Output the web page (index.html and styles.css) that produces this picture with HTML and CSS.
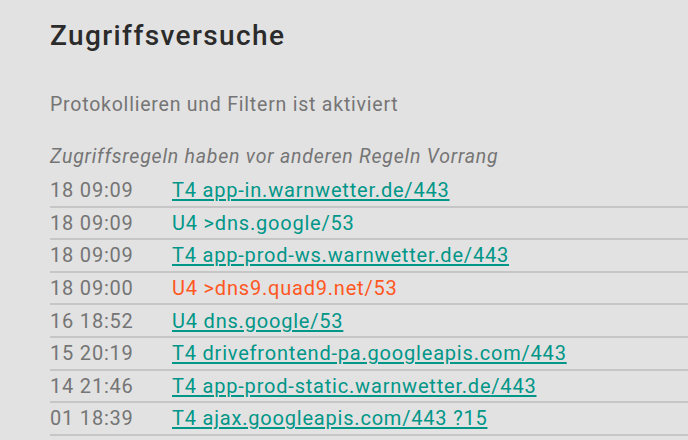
FILE: index.html
```html
<!DOCTYPE html>
<html lang="de">
<head>
    <meta charset="UTF-8">
    <meta name="viewport" content="width=device-width, initial-scale=1.0">
    <title>Zugriffsversuche</title>
    <link rel="stylesheet" href="styles.css">
</head>
<body>
    <div class="dialog">
        <h1 class="title">Zugriffsversuche</h1>
        <p class="status">Protokollieren und Filtern ist aktiviert</p>
        <p class="hint">Zugriffsregeln haben vor anderen Regeln Vorrang</p>
        <ul class="access-list">
            <li class="row"><span class="time">18 09:09</span><a class="dest" href="#">T4 app-in.warnwetter.de/443</a></li>
            <li class="row"><span class="time">18 09:09</span><span class="dest">U4 &gt;dns.google/53</span></li>
            <li class="row"><span class="time">18 09:09</span><a class="dest" href="#">T4 app-prod-ws.warnwetter.de/443</a></li>
            <li class="row"><span class="time">18 09:00</span><span class="dest blocked">U4 &gt;dns9.quad9.net/53</span></li>
            <li class="row"><span class="time">16 18:52</span><a class="dest" href="#">U4 dns.google/53</a></li>
            <li class="row"><span class="time">15 20:19</span><a class="dest" href="#">T4 drivefrontend-pa.googleapis.com/443</a></li>
            <li class="row"><span class="time">14 21:46</span><a class="dest" href="#">T4 app-prod-static.warnwetter.de/443</a></li>
            <li class="row"><span class="time">01 18:39</span><a class="dest" href="#">T4 ajax.googleapis.com/443 ?15</a></li>
        </ul>
    </div>
</body>
</html>
```

FILE: styles.css
```css
body {
    font-family: Roboto, 'Noto Sans', sans-serif;
    margin: 0;
    padding: 0;
    background-color: #e2e2e2;
    overflow: hidden;
}
.dialog {
    padding: 17px 0 0 50px;
}
.title {
    font-size: 28px;
    font-weight: 500;
    letter-spacing: 0.05em;
    color: #2b2b2b;
    margin: 0;
    line-height: 38px;
}
.status {
    font-size: 19.5px;
    letter-spacing: 0.04em;
    color: #757575;
    margin: 38px 0 0;
    line-height: 24px;
}
.hint {
    font-size: 19.5px;
    font-style: italic;
    letter-spacing: 0.04em;
    color: #757575;
    margin: 28px 0 6px;
    line-height: 24px;
}
.access-list {
    list-style: none;
    margin: 0;
    padding: 0;
}
.row {
    display: flex;
    align-items: center;
    height: 30.6px;
    border-bottom: 2px solid #c6c6c6;
    font-size: 20px;
    letter-spacing: 0.04em;
    white-space: nowrap;
}
.time {
    width: 122px;
    color: #757575;
    flex-shrink: 0;
}
.dest {
    color: #009688;
    text-decoration: none;
}
a.dest {
    text-decoration: underline;
    text-underline-offset: 2px;
}
.blocked {
    color: #ff5722;
}
```
